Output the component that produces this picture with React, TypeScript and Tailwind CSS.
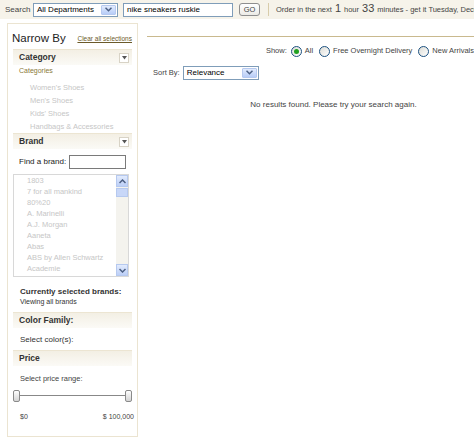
import React from "react";

const F = { fontFamily: '"Liberation Sans", Arial, sans-serif' };

function XpArrow() {
  return (
    <div className="w-[15px] h-full shrink-0 border border-[#b6c9ef] bg-gradient-to-b from-[#e2ebfd] to-[#b8cdf7] flex items-center justify-center rounded-[1px]">
      <svg width="7" height="5" viewBox="0 0 7 5">
        <path d="M0.5 0.8 L3.5 3.8 L6.5 0.8" fill="none" stroke="#4d6185" strokeWidth="1.5" />
      </svg>
    </div>
  );
}

function XpSelect({ w, text, h = 14 }: { w: number; text: string; h?: number }) {
  return (
    <div
      className="flex items-stretch shrink-0 border border-[#7f9db9] bg-white p-[1px]"
      style={{ width: w, height: h }}
    >
      <div className="flex-1 flex items-center pl-[2px] text-[8px] text-black leading-none whitespace-nowrap">{text}</div>
      <XpArrow />
    </div>
  );
}

function Header({ title, arrow = false }: { title: string; arrow?: boolean }) {
  return (
    <div className="mx-[5px] h-[16px] border-t border-[#ece5d2] bg-gradient-to-b from-[#f3efe4] to-[#fbfaf6] flex items-center justify-between pl-[6px] pr-[3px]">
      <span className="text-[8.5px] font-bold text-[#333]">{title}</span>
      {arrow && (
        <div className="w-[10px] h-[10px] border border-[#d8d3c6] bg-white flex items-center justify-center">
          <svg width="5" height="4" viewBox="0 0 5 4">
            <path d="M0 0 L5 0 L2.5 3.5 Z" fill="#555" />
          </svg>
        </div>
      )}
    </div>
  );
}

function Radio({ on }: { on?: boolean }) {
  return (
    <div className="w-[11px] h-[11px] shrink-0 rounded-full border border-[#1c5180] bg-gradient-to-br from-[#dcdcd6] to-white flex items-center justify-center">
      {on && <div className="w-[5px] h-[5px] rounded-full bg-[#21a121]" />}
    </div>
  );
}

const brands = [
  "1803",
  "7 for all mankind",
  "80%20",
  "A. Marinelli",
  "A.J. Morgan",
  "Aaneta",
  "Abas",
  "ABS by Allen Schwartz",
  "Academie",
  "Acorn",
];

export default function App() {
  return (
    <div className="w-[474px] h-[442px] overflow-hidden bg-white relative" style={F}>
      {/* top bar */}
      <div className="h-[19px] bg-[#f6f3ea] flex items-center whitespace-nowrap overflow-hidden">
        <span className="ml-[5px] text-[8px] text-[#444] w-[28px] shrink-0">Search</span>
        <XpSelect w={85} text="All Departments" />
        <div className="ml-[5px] w-[110px] h-[14px] shrink-0 border border-[#7f9db9] bg-white flex items-center pl-[3px] text-[8px] text-black">
          nike sneakers ruskie
        </div>
        <div className="ml-[6px] w-[21px] h-[13px] shrink-0 border border-[#8e8e8e] rounded-[3px] bg-gradient-to-b from-white to-[#ecebe6] flex items-center justify-center text-[7.5px] text-[#444]">
          GO
        </div>
        <div className="ml-[8px] w-[1px] h-[13px] shrink-0 bg-[#d8ccaa]" />
        <span className="ml-[7px] shrink-0 text-[7.5px] text-[#444] flex items-baseline">
          Order in the next
          <span className="text-[11px] mx-[3px] leading-none">1</span>
          hour
          <span className="text-[11px] mx-[3px] leading-none">33</span>
          minutes - get it Tuesday, December
        </span>
      </div>

      <div className="flex pt-[4px] pl-[7px]">
        {/* sidebar */}
        <div className="w-[131px] h-[414px] border border-[#ebe4d1] shrink-0">
          <div className="h-[25px] flex items-center justify-between pl-[4px] pr-[5px] pt-[4px]">
            <span className="text-[11.5px] text-[#222]">Narrow By</span>
            <span className="text-[6.5px] text-[#6b5a2a] underline">Clear all selections</span>
          </div>
          <Header title="Category" arrow />
          <div className="h-[11px] flex items-center pl-[11px] pt-[1px] text-[7px] text-[#8a7838]">Categories</div>
          <div className="pt-[5px] pl-[22px] text-[7.5px] text-[#c6c6c6]">
            {["Women's Shoes", "Men's Shoes", "Kids' Shoes", "Handbags & Accessories"].map((c) => (
              <div key={c} className="h-[13px] flex items-center">
                {c}
              </div>
            ))}
          </div>
          <Header title="Brand" arrow />
          <div className="h-[25px] flex items-center pl-[11px] pt-[1px]">
            <span className="text-[8px] text-[#222]">Find a brand:</span>
            <div className="ml-[3px] w-[57px] h-[14px] border border-[#7a7a7a] bg-white" />
          </div>
          <div className="ml-[5px] w-[116px] h-[103px] border border-[#d8d8d8] flex overflow-hidden">
            <div className="flex-1 pl-[13px] text-[7.5px] text-[#c6c6c6]">
              {brands.map((b) => (
                <div key={b} className="h-[11px] flex items-center whitespace-nowrap">
                  {b}
                </div>
              ))}
            </div>
            <div className="w-[12px] bg-[#f4f3ee] flex flex-col">
              <div className="h-[12px] border border-[#b6c9ef] bg-gradient-to-b from-[#e2ebfd] to-[#bccff7] flex items-center justify-center">
                <svg width="7" height="5" viewBox="0 0 7 5">
                  <path d="M0.5 4 L3.5 1 L6.5 4" fill="none" stroke="#4d6185" strokeWidth="1.5" />
                </svg>
              </div>
              <div className="h-[9px] mt-[1px] border border-[#b6c9ef] bg-[#c8d7f8]" />
              <div className="flex-1" />
              <div className="h-[12px] border border-[#b6c9ef] bg-gradient-to-b from-[#e2ebfd] to-[#bccff7] flex items-center justify-center">
                <svg width="7" height="5" viewBox="0 0 7 5">
                  <path d="M0.5 1 L3.5 4 L6.5 1" fill="none" stroke="#4d6185" strokeWidth="1.5" />
                </svg>
              </div>
            </div>
          </div>
          <div className="pl-[12px] pt-[10px] h-[35px]">
            <div className="text-[8px] font-bold text-[#333] leading-[10px] whitespace-nowrap">Currently selected brands:</div>
            <div className="text-[7px] text-[#333] leading-[9px] whitespace-nowrap">Viewing all brands</div>
          </div>
          <Header title="Color Family:" />
          <div className="h-[22px] flex items-center pl-[12px] pt-[1px] text-[8px] text-[#333]">Select color(s):</div>
          <Header title="Price" />
          <div className="h-[24px] flex items-center pl-[12px] pt-[2px] text-[7.5px] text-[#444]">Select price range:</div>
          <div className="relative mx-[5px] h-[12px]">
            <div className="absolute left-[4px] right-[4px] top-[5px] h-[1px] bg-[#888]" />
            <div className="absolute left-0 top-0 w-[7px] h-[12px] rounded-[2px] border border-[#8a8a8a] bg-gradient-to-b from-white to-[#d4d4d4]" />
            <div className="absolute right-0 top-0 w-[7px] h-[12px] rounded-[2px] border border-[#8a8a8a] bg-gradient-to-b from-white to-[#d4d4d4]" />
          </div>
          <div className="flex justify-between pl-[12px] pr-[3px] pt-[10px] text-[7px] text-[#444]">
            <span>$0</span>
            <span>$ 100,000</span>
          </div>
        </div>

        {/* main */}
        <div className="flex-1 ml-[9px]">
          <div className="h-[13px]" />
          <div className="h-[1px] bg-[#c9b98e]" />
          <div className="h-[27px] flex items-center justify-end pt-[1px] whitespace-nowrap text-[7.5px] text-[#444]">
            <span className="mr-[4px]">Show:</span>
            <Radio on />
            <span className="ml-[3px] mr-[6px]">All</span>
            <Radio />
            <span className="ml-[3px] mr-[6px]">Free Overnight Delivery</span>
            <Radio />
            <span className="ml-[3px]">New Arrivals</span>
          </div>
          <div className="flex items-center pl-[6px] h-[15px] mt-[1px]">
            <span className="text-[7.5px] text-[#444] mr-[3px]">Sort By:</span>
            <XpSelect w={76} text="Relevance" />
          </div>
          <div className="text-center text-[8px] text-[#444] mt-[19px] pl-[46px] whitespace-nowrap">
            No results found. Please try your search again.
          </div>
        </div>
      </div>
    </div>
  );
}
